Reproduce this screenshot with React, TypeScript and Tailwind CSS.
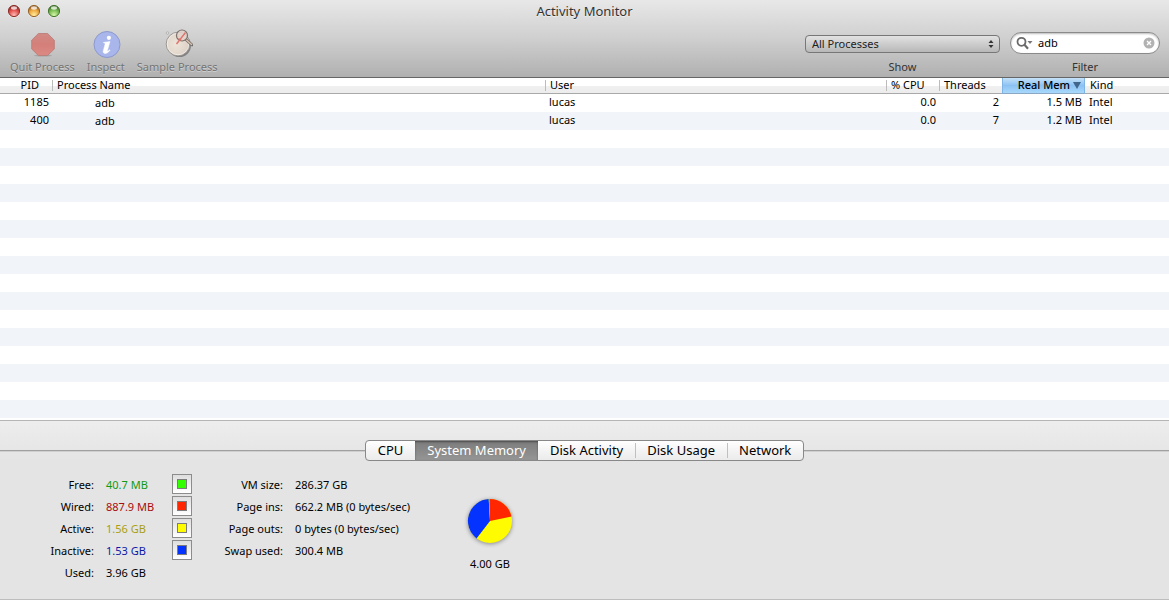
import React from 'react';

type Process = { pid: number; name: string; user: string; cpu: string; threads: number; mem: string; kind: string };

const processes: Process[] = [
  { pid: 1185, name: 'adb', user: 'lucas', cpu: '0.0', threads: 2, mem: '1.5 MB', kind: 'Intel' },
  { pid: 400, name: 'adb', user: 'lucas', cpu: '0.0', threads: 7, mem: '1.2 MB', kind: 'Intel' },
];

const emptyRows = Array.from({ length: 16 }, (_, i) => i);

const memory = [
  { label: 'Free:', value: '40.7 MB', text: 'text-[#129a12]', swatch: 'bg-[#33ff00]' },
  { label: 'Wired:', value: '887.9 MB', text: 'text-[#a80c0c]', swatch: 'bg-[#ff2600]' },
  { label: 'Active:', value: '1.56 GB', text: 'text-[#a8a010]', swatch: 'bg-[#fffb00]' },
  { label: 'Inactive:', value: '1.53 GB', text: 'text-[#0c18a8]', swatch: 'bg-[#0433ff]' },
  { label: 'Used:', value: '3.96 GB', text: 'text-black', swatch: '' },
];

const paging = [
  ['VM size:', '286.37 GB'],
  ['Page ins:', '662.2 MB (0 bytes/sec)'],
  ['Page outs:', '0 bytes (0 bytes/sec)'],
  ['Swap used:', '300.4 MB'],
];

const tabs = ['CPU', 'System Memory', 'Disk Activity', 'Disk Usage', 'Network'];

function Light({ label, id, edge, mid, glow }: { label: string; id: string; edge: string; mid: string; glow: string }) {
  return (
    <button type="button" aria-label={label} className="size-[14px]">
      <svg viewBox="0 0 14 14" className="block size-[14px]">
        <defs>
          <radialGradient id={id} cx="0.5" cy="0.85" r="0.75">
            <stop offset="0" stopColor={glow} />
            <stop offset="0.6" stopColor={mid} />
            <stop offset="1" stopColor={edge} />
          </radialGradient>
        </defs>
        <circle cx="7" cy="7.6" r="6" fill="#fff" opacity="0.5" />
        <circle cx="7" cy="7" r="5.6" fill={`url(#${id})`} stroke={edge} strokeWidth="1" />
        <ellipse cx="7" cy="4" rx="3" ry="1.7" fill="#fff" opacity="0.75" />
      </svg>
    </button>
  );
}

function StopIcon() {
  return (
    <svg viewBox="-1 0 32 32" className="block size-8">
      <defs>
        <linearGradient id="stop" x1="0" y1="0" x2="0" y2="1">
          <stop offset="0" stopColor="#d18a85" />
          <stop offset="0.5" stopColor="#d47f79" />
          <stop offset="1" stopColor="#dd8a84" />
        </linearGradient>
      </defs>
      <ellipse cx="16" cy="27.6" rx="9" ry="1" fill="#777" opacity="0.4" />
      <path d="M11.4 5.500h9.2l6.700 6.700v8.800l-6.700 6.400h-9.200l-6.700-6.400v-8.800z" fill="url(#stop)" stroke="#b97874" strokeWidth="0.8" />
    </svg>
  );
}

function InfoIcon() {
  return (
    <svg viewBox="-1 0 32 32" className="block size-8">
      <circle cx="16" cy="16.5" r="13" fill="#a9b6ec" stroke="#8c99cc" />
      <circle cx="17.9" cy="9.8" r="2.1" fill="#fff" />
      <path d="M12.600 14.400l6.400-.9-2.600 8.900c-.3 1.200.5 1 2.200-.7l.5.5c-2.100 2.700-3.600 3.300-5.100 3.200-1.500-.1-2.100-1.100-1.700-2.700l1.700-6.200c.3-1.100.1-1.400-1.400-1.500z" fill="#fff" stroke="#fff" strokeWidth="0.5" />
    </svg>
  );
}

function SampleIcon() {
  return (
    <svg viewBox="-2 0 32 32" className="block size-8">
      <defs>
        <radialGradient id="dial" cx="0.4" cy="0.5" r="0.65">
          <stop offset="0" stopColor="#efe4d8" />
          <stop offset="0.75" stopColor="#e0d5ca" />
          <stop offset="1" stopColor="#c4bdb5" />
        </radialGradient>
      </defs>
      <circle cx="16.5" cy="17.5" r="11.5" fill="#555" opacity="0.6" />
      <circle cx="15" cy="16" r="11.8" fill="url(#dial)" stroke="#999692" />
      <circle cx="15" cy="16" r="10.8" fill="none" stroke="#fff" strokeOpacity="0.5" />
      <circle cx="4.5" cy="5" r="1.3" fill="#ddd" stroke="#999" strokeWidth="0.5" />
      <path d="M23.500 12l5.500 5" stroke="#716c68" strokeWidth="3" strokeLinecap="round" />
      <path d="M23.500 12l5 4.500" stroke="#d9bfb0" strokeWidth="1.500" strokeLinecap="round" />
      <circle cx="19" cy="7.5" r="5.5" fill="#e2d2cb" fillOpacity="0.85" stroke="#7d716c" strokeWidth="1.2" />
      <path d="M13.500 16L22.500 4.500M15.500 10.500l3 2" stroke="#e0736b" strokeWidth="1.4" />
    </svg>
  );
}

function ToolButton({ label, children }: { label: string; children: React.ReactNode }) {
  return (
    <button type="button" className="flex flex-col items-center text-[11px] leading-4 text-[#747474] [text-shadow:0_1px_0_#ffffff60]">
      {children}
      <span className="-mt-px px-px">{label}</span>
    </button>
  );
}

const th = 'relative h-4 border-b border-[#a9a9a9] p-0 px-[5px] pb-[2px] font-normal leading-[13px]';
const sep = <span className="absolute left-0 top-[2px] h-[11px] w-px bg-[#bcbcbc]" />;

export default function App() {
  return (
    <main className="flex min-h-screen flex-col border-b border-[#bdbdbd] bg-[#e4e4e4] font-['Noto_Sans','Open_Sans',sans-serif] text-[11px] text-black">
      <header className="flex h-[78px] flex-col border-b border-[#666] bg-linear-to-b from-[#e8e8e8] via-[#cfcfcf] to-[#b0b0b0]">
        <div className="grid h-[22px] grid-cols-[1fr_auto_1fr] items-center px-[7px]">
          <div className="flex gap-[6px]">
            <Light label="Close" id="close" edge="#8e2f2c" mid="#e0504c" glow="#ffb9b4" />
            <Light label="Minimize" id="min" edge="#96622a" mid="#eea73f" glow="#ffee9c" />
            <Light label="Zoom" id="max" edge="#45762f" mid="#79bb53" glow="#d4f7a8" />
          </div>
          <h1 className="text-[13px] leading-5 text-[#333] [text-shadow:0_1px_0_#ffffff80]">Activity Monitor</h1>
        </div>
        <div className="flex items-start justify-between px-[9px]">
          <div className="flex gap-[10px] pt-[6px]">
            <ToolButton label="Quit Process"><StopIcon /></ToolButton>
            <ToolButton label="Inspect"><InfoIcon /></ToolButton>
            <ToolButton label="Sample Process"><SampleIcon /></ToolButton>
          </div>
          <div className="flex gap-[10px] pt-[10px] text-[#333]">
            <div className="flex flex-col items-center">
              <div className="relative mt-[3px]">
                <select id="show" className="block h-[18px] w-[195px] appearance-none rounded border border-[#777] bg-linear-to-b from-[#e2e2e2] to-[#b8b8b8] px-[6px] text-[11px] leading-4 text-[#222]">
                  <option>All Processes</option>
                </select>
                <svg viewBox="0 0 6 8" className="pointer-events-none absolute right-[6px] top-[5px] h-2 w-[6px]" fill="#333">
                  <path d="M3 0l2.500 3h-5zM3 8L.5 5h5z" />
                </svg>
              </div>
              <label htmlFor="show" className="mt-[6px] leading-4">Show</label>
            </div>
            <div className="flex flex-col items-center">
              <div className="flex h-[22px] w-[150px] items-center rounded-full border border-[#8a8a8a] bg-white pl-[5px] pr-1 text-black shadow-[inset_0_1px_2px_#0004]">
                <svg viewBox="0 0 18 14" className="h-[14px] w-[18px] shrink-0" fill="none">
                  <circle cx="5.5" cy="5.8" r="4" stroke="#6a6a6a" strokeWidth="1.8" />
                  <path d="M8.500 8.800l3.500 4" stroke="#6a6a6a" strokeWidth="2.2" />
                  <path d="M11.500 5h5l-2.500 3z" fill="#777" />
                </svg>
                <input id="filter" defaultValue="adb" className="ml-1 w-full min-w-0 bg-transparent text-[11px] leading-4 outline-none" />
                <button type="button" aria-label="Clear filter" className="shrink-0">
                  <svg viewBox="0 0 12 12" className="block size-3">
                    <circle cx="6" cy="6" r="5.5" fill="#b2b2b2" />
                    <path d="M4 4l4 4M8 4l-4 4" stroke="#fff" strokeWidth="1.3" />
                  </svg>
                </button>
              </div>
              <label htmlFor="filter" className="mt-[5px] leading-4">Filter</label>
            </div>
          </div>
        </div>
      </header>

      <table className="w-full table-fixed border-separate border-spacing-0 bg-white">
        <colgroup>
          <col className="w-[52px]" />
          <col className="w-[493px]" />
          <col />
          <col className="w-[53px]" />
          <col className="w-[63px]" />
          <col className="w-[83px]" />
          <col className="w-[84px]" />
        </colgroup>
        <thead>
          <tr className="bg-linear-to-b from-white from-50% via-[#f0f0f0] via-50% to-[#ececec] text-left">
            <th className={`${th} pr-[13px] text-right`}>PID</th>
            <th className={th}>{sep}Process Name</th>
            <th className={th}>{sep}User</th>
            <th className={th}>{sep}% CPU</th>
            <th className={th}>{sep}Threads</th>
            <th className="h-4 border-x border-b border-x-[#7fb4e6] border-b-[#8aa8c4] bg-linear-to-b from-[#c6e2f8] via-[#8cc2f3] to-[#a8d8fb] p-0 pb-[2px] pr-[3px] text-right font-medium leading-[13px]">
              <span className="flex items-center justify-end gap-[3px]">Real Mem
                <svg viewBox="0 0 8 8" className="size-2"><path d="M0 1h8L4 8z" fill="#41658c" /></svg>
              </span>
            </th>
            <th className={th}>Kind</th>
          </tr>
        </thead>
        <tbody>
          {processes.map((p) => (
            <tr key={p.pid} className="h-[18px] leading-4 even:bg-[#f1f5fa]">
              <td className="p-0 pb-[2px] pr-[3px] text-right">{p.pid}</td>
              <td className="p-0 pl-[43px]">{p.name}</td>
              <td className="p-0 pb-[2px] pl-1">{p.user}</td>
              <td className="p-0 pb-[2px] pr-[3px] text-right">{p.cpu}</td>
              <td className="p-0 pb-[2px] pr-[3px] text-right">{p.threads}</td>
              <td className="p-0 pb-[2px] pr-[3px] text-right">{p.mem}</td>
              <td className="p-0 pb-[2px] pl-1">{p.kind}</td>
            </tr>
          ))}
          {emptyRows.map((i) => (
            <tr key={i} className="h-[18px] even:bg-[#f1f5fa]"><td colSpan={7} className="p-0" /></tr>
          ))}
        </tbody>
      </table>

      <section className="flex-1 border-t-2 border-white bg-[#e4e4e4]">
        <div className="border-t border-[#b4b4b4] bg-linear-to-b from-[#ededed] to-[#e4e4e4] pt-[19px]">
          <div className="flex items-center">
            <span className="h-[2px] flex-1 border-t border-[#a0a0a0] bg-[#cfcfcf]" />
            <div role="tablist" className="flex h-[21px] overflow-hidden rounded border border-[#888] bg-linear-to-b from-white via-[#f4f4f4] to-[#ebebeb] text-[13px] leading-[19px]">
              {tabs.map((t, i) => (
                <button
                  key={t}
                  type="button"
                  role="tab"
                  aria-selected={i === 1}
                  className={i === 1
                    ? 'bg-linear-to-b from-[#7c7c7c] to-[#959595] px-3 text-white shadow-[inset_0_1px_2px_#0006]'
                    : 'relative px-3'}
                >
                  {i > 2 && <span className="absolute left-0 top-[2px] h-[15px] w-px bg-[#c0c0c0]" />}
                  {t}
                </button>
              ))}
            </div>
            <span className="h-[2px] flex-1 border-t border-[#a0a0a0] bg-[#cfcfcf]" />
          </div>
        </div>
        <div className="flex items-start pt-[13px] leading-[22px]">
          <dl className="w-[192px]">
            {memory.map((m) => (
              <div key={m.label} className="flex h-[22px] items-start">
                <dt className="w-[94px] text-right">{m.label}</dt>
                <dd className={`w-[78px] pl-3 ${m.text}`}>{m.value}</dd>
                {m.swatch && (
                  <button type="button" aria-label={`${m.label} color`} className="grid size-5 place-items-center border border-[#8c8c8c] bg-linear-to-b from-[#dedede] to-white">
                    <span className={`block size-[10px] border border-[#7c7c7c] ${m.swatch}`} />
                  </button>
                )}
              </div>
            ))}
          </dl>
          <dl>
            {paging.map(([k, v]) => (
              <div key={k} className="flex">
                <dt className="w-[91px] text-right">{k}</dt>
                <dd className="w-[170px] pl-3">{v}</dd>
              </div>
            ))}
          </dl>
          <figure className="flex w-[74px] flex-col items-center pt-[21px]">
            <svg viewBox="0 0 52 52" className="size-[52px] drop-shadow-[0_1px_2px_#0006]">
              <circle cx="26" cy="26" r="22" fill="#fffb00" />
              <path d="M26 26V4a22 22 0 0 1 21.500 17.500z" fill="#ff2600" />
              <path d="M26 26L12.500 43.400A22 22 0 0 1 24.700 4z" fill="#0433ff" />
              <path d="M26 26L24.700 4H26z" fill="#20e060" />
            </svg>
            <figcaption className="mt-[6px]">4.00 GB</figcaption>
          </figure>
        </div>
      </section>
    </main>
  );
}
